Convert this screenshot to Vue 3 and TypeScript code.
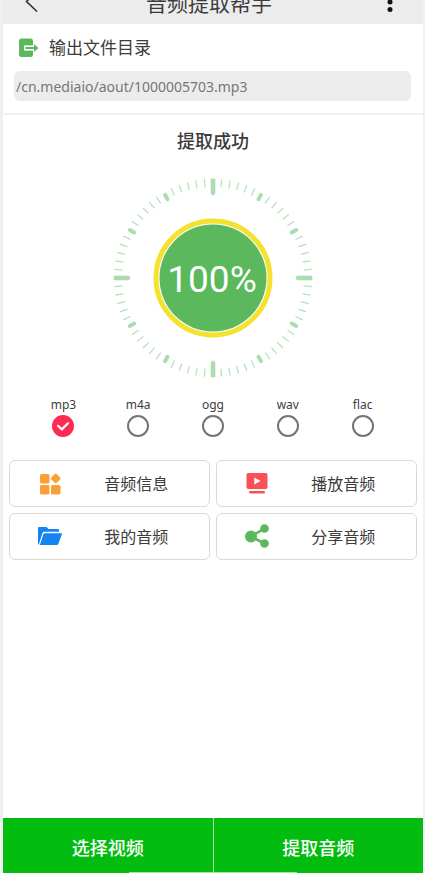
<script setup lang="ts">
import { ref } from 'vue'

interface Tick {
  angle: number
  kind: 'minor' | 'major' | 'cardinal'
  path: string
}

const outputPath = ref('/cn.mediaio/aout/1000005703.mp3')
const formats: string[] = ['mp3', 'm4a', 'ogg', 'wav', 'flac']
const selected = ref('mp3')
const progress = ref(100)

const actions = [
  { id: 'info', label: '音频信息' },
  { id: 'play', label: '播放音频' },
  { id: 'mine', label: '我的音频' },
  { id: 'share', label: '分享音频' },
]

const ticks: Tick[] = Array.from({ length: 72 }, (_, i) => {
  const angle = i * 5
  if (angle % 90 === 0) return { angle, kind: 'cardinal', path: 'M98 1 H102 V15 Q102 17 100 17 Q98 17 98 15 Z' }
  if (angle % 30 === 0) return { angle, kind: 'major', path: 'M100 4 V9' }
  return { angle, kind: 'minor', path: 'M100 1 V9' }
})
</script>

<template>
  <div class="screen">
    <header class="topbar">
      <button class="icon-button" type="button" aria-label="返回">
        <svg width="14" height="24" viewBox="0 0 14 24">
          <path d="M12 3.500 L1.500 13.500 L12 23.500" fill="none" stroke="#333" stroke-width="1.600" />
        </svg>
      </button>
      <h1 class="title">音频提取帮手</h1>
      <button class="icon-button" type="button" aria-label="更多">
        <svg width="6" height="20" viewBox="0 0 6 20">
          <circle cx="3" cy="2.500" r="2.500" fill="#111" />
          <circle cx="3" cy="10" r="2.500" fill="#111" />
          <circle cx="3" cy="17.500" r="2.500" fill="#111" />
        </svg>
      </button>
    </header>

    <section class="output">
      <label class="output-label" for="path">
        <svg width="20" height="20" viewBox="0 0 20 20">
          <rect x="0" y="0.500" width="14" height="18.500" rx="2.500" fill="#5cb85c" />
          <path d="M5 7.400 H15.500 V12.600 H5 Z" fill="#fff" />
          <path d="M6.400 8.900 H15 V6 L19.500 10 L15 14 V11.100 H6.400 Z" fill="#5cb85c" />
        </svg>
        <span>输出文件目录</span>
      </label>
      <input id="path" v-model="outputPath" class="path" type="text" readonly />
    </section>

    <main class="content">
      <h2 class="status">提取成功</h2>

      <svg class="gauge" viewBox="0 0 200 200" role="img" aria-label="进度">
        <path
          v-for="tick in ticks"
          :key="tick.angle"
          :class="tick.kind"
          :d="tick.path"
          :transform="`rotate(${tick.angle} 100 100)`"
        />
        <circle cx="100" cy="100" r="57" fill="#fff" stroke="#f5e12f" stroke-width="5" />
        <circle cx="100" cy="100" r="53.500" fill="#5cb85c" />
        <text x="99" y="114" text-anchor="middle" class="percent">{{ progress }}%</text>
      </svg>

      <div class="formats" role="radiogroup" aria-label="格式">
        <label v-for="format in formats" :key="format" class="format">
          <span class="format-name">{{ format }}</span>
          <span class="radio">
            <input v-model="selected" type="radio" name="format" :value="format" />
            <svg v-if="selected === format" width="22" height="22" viewBox="0 0 22 22">
              <path
                d="M6 10.800 L9.800 14.400 L16 8.200"
                fill="none"
                stroke="#fff"
                stroke-width="2.200"
                stroke-linecap="round"
                stroke-linejoin="round"
              />
            </svg>
          </span>
        </label>
      </div>

      <div class="actions">
        <button v-for="action in actions" :key="action.id" type="button" class="action">
          <svg v-if="action.id === 'info'" width="24" height="24" viewBox="0 0 24 24" fill="#fb9f3a">
            <rect x="2" y="3" width="9.500" height="9.500" rx="1.500" />
            <rect x="2" y="14" width="9.500" height="9.500" rx="1.500" />
            <rect x="13" y="14" width="9.500" height="9.500" rx="1.500" />
            <rect x="14" y="3.700" width="7.500" height="7.500" rx="1" transform="rotate(45 17.750 7.450)" />
          </svg>
          <svg v-else-if="action.id === 'play'" width="24" height="24" viewBox="0 0 24 24">
            <rect x="1.500" y="2" width="21" height="16" rx="1.800" fill="#fa5157" />
            <path d="M9.300 6.500 L15.500 10 L9.300 13.500 Z" fill="#fff" />
            <rect x="4" y="20" width="16" height="2.400" rx="1.200" fill="#fa5157" />
          </svg>
          <svg v-else-if="action.id === 'mine'" width="24" height="24" viewBox="0 0 24 24" fill="#1584f0">
            <path d="M0 20.500 V4 Q0 3 1 3 H8.500 L10.500 5 H20 Q21 5 21 6 V7.800 H6.200 Q5 7.800 4.500 9 L0.800 20.500 Z" />
            <path d="M6.600 9.300 H23.200 Q24.200 9.300 23.900 10.200 L20.300 20 Q19.900 21 18.900 21 H1.800 L5.400 10.200 Q5.700 9.300 6.600 9.300 Z" />
          </svg>
          <svg v-else width="24" height="24" viewBox="0 0 24 24" fill="#5cb85c">
            <path d="M19.500 4.500 L6 12.500 L19.500 19.500" fill="none" stroke="#5cb85c" stroke-width="2.600" />
            <circle cx="6" cy="12.500" r="6" />
            <circle cx="19.500" cy="4.500" r="4.300" />
            <circle cx="19.500" cy="19.500" r="4.300" />
          </svg>
          <span>{{ action.label }}</span>
        </button>
      </div>
    </main>

    <footer class="bottom">
      <button type="button">选择视频</button>
      <button type="button">提取音频</button>
      <span class="home-indicator" aria-hidden="true"></span>
    </footer>
  </div>
</template>

<style>
body {
  margin: 0;
  background: #f0f0f0;
}
</style>

<style scoped>
.screen {
  box-sizing: border-box;
  display: flex;
  flex-direction: column;
  min-height: 100vh;
  margin: 0 2px 0 3px;
  background: #fff;
  color: #3c3c3c;
  font-family: 'Noto Sans', 'Noto Sans CJK SC', sans-serif;
}

button {
  margin: 0;
  padding: 0;
  border: 0;
  background: none;
  color: inherit;
  font-family: inherit;
  cursor: pointer;
}

svg {
  display: block;
}

.topbar {
  display: grid;
  grid-template-columns: 1fr auto 1fr;
  grid-template-rows: 24px;
  align-items: end;
  padding: 0 30px 0 22px;
  overflow: hidden;
  background: #ececec;
}

.icon-button {
  justify-self: start;
  padding-bottom: 12px;
}

.icon-button:last-child {
  justify-self: end;
}

.title {
  margin: 0;
  padding-bottom: 5px;
  font-size: 21px;
  font-weight: 400;
  line-height: 32px;
}

.output {
  padding: 12px 12px 12px 11px;
  border-bottom: 2px solid #f0f0f0;
}

.output-label {
  display: flex;
  align-items: center;
  gap: 10px;
  padding-left: 5px;
  font-size: 17px;
  line-height: 24px;
}

.path {
  box-sizing: border-box;
  display: block;
  width: 100%;
  height: 30px;
  margin: 11px 0 0;
  padding: 0 2px;
  border: 0;
  border-radius: 6px;
  background: #ececec;
  color: #777;
  font-family: inherit;
  font-size: 14px;
}

.content {
  display: flex;
  flex: 1;
  flex-direction: column;
}

.status {
  margin: 13px 0 23px;
  font-size: 18px;
  font-weight: 500;
  line-height: 27px;
  text-align: center;
}

.gauge {
  align-self: center;
  width: 200px;
  height: 200px;
}

.minor {
  stroke: #b5e0b6;
  stroke-width: 1.2;
}

.major {
  stroke: #addcae;
  stroke-width: 4;
  stroke-linecap: round;
}

.cardinal {
  fill: #addcae;
  stroke: #addcae;
  stroke-width: 0.6;
}

.percent {
  fill: #fff;
  font-family: Roboto, sans-serif;
  font-size: 37px;
}

.formats {
  display: grid;
  grid-template-columns: repeat(5, 1fr);
  padding: 18px 23px 0;
}

.format {
  display: grid;
  justify-items: center;
  gap: 2px;
  font-size: 12px;
  line-height: 17px;
}

.radio {
  display: grid;
}

.radio > * {
  grid-area: 1 / 1;
}

.radio svg {
  z-index: 1;
  pointer-events: none;
}

.radio input {
  box-sizing: border-box;
  width: 22px;
  height: 22px;
  margin: 0;
  border: 2px solid #747474;
  border-radius: 50%;
  appearance: none;
}

.radio input:checked {
  border-color: #fe2c55;
  background: #fe2c55;
}

.actions {
  display: grid;
  grid-template-columns: repeat(2, 1fr);
  gap: 6px;
  padding: 23px 6px;
}

.action {
  box-sizing: border-box;
  display: grid;
  grid-template-columns: 40fr 47fr 13fr;
  align-items: center;
  justify-items: center;
  height: 47px;
  padding-bottom: 2px;
  border: 1px solid #d9d9d9;
  border-radius: 6px;
  font-size: 16px;
  white-space: nowrap;
}

.bottom {
  position: relative;
  display: grid;
  grid-template-columns: repeat(2, 1fr);
  gap: 1px;
  background: #a5e3a8;
}

.bottom button {
  height: 55px;
  padding-top: 2px;
  background: #02bd0f;
  color: #fff;
  font-size: 18px;
  font-weight: 500;
}

.home-indicator {
  position: absolute;
  bottom: 0;
  left: 30%;
  width: 40%;
  height: 1px;
  background: #a5e3a8;
}
</style>
